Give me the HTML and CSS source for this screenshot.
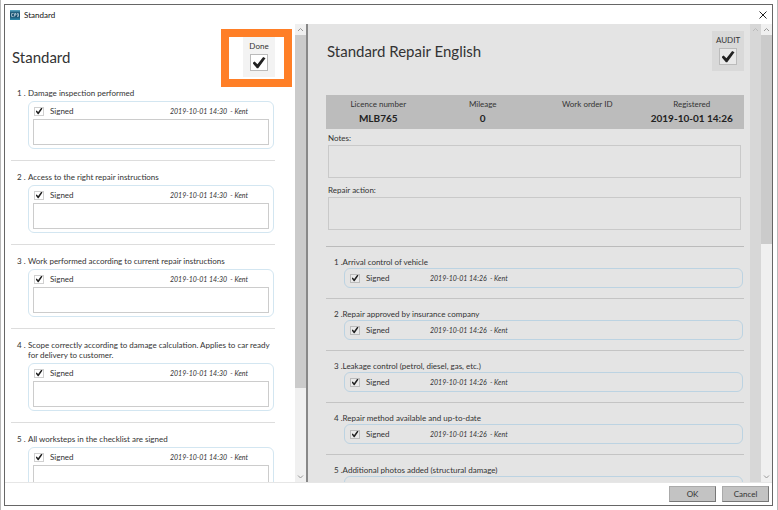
FILE: index.html
```html
<!DOCTYPE html>
<html lang="en">
<head>
    <meta charset="UTF-8">
    <meta name="viewport" content="width=device-width, initial-scale=1.0">
    <title>Standard</title>
    <link rel="stylesheet" href="styles.css">
</head>
<body>
<div class="window">
    <header class="titlebar">
        <svg class="app-icon" viewBox="0 0 10 10" aria-hidden="true">
            <defs>
                <linearGradient id="iconFill" x1="0" y1="0" x2="0" y2="1">
                    <stop offset="0" stop-color="#5fb0cc"/>
                    <stop offset="0.3" stop-color="#17506f"/>
                    <stop offset="0.65" stop-color="#17506f"/>
                    <stop offset="1" stop-color="#3390b2"/>
                </linearGradient>
            </defs>
            <rect width="10" height="10" fill="url(#iconFill)"/>
            <path d="M3.6 3.6H1.6V6.4H3.6M4.6 6.6V3.6H6V5H4.6M7 3.6H8.4V6.4H7M7 5H8.4" fill="none" stroke="#d5e8f0" stroke-width="0.7"/>
        </svg>
        <span class="window-title">Standard</span>
        <button type="button" class="close" aria-label="Close">
            <svg viewBox="0 0 8 8"><path d="M0.5 0.5L7.5 7.5M7.5 0.5L0.5 7.5" fill="none" stroke="#222" stroke-width="1"/></svg>
        </button>
    </header>
    <main class="panes">
        <section class="pane checklist">
            <div class="content">
                <div class="head">
                    <h1>Standard</h1>
                    <label class="status highlight">Done<input type="checkbox" class="check big" checked></label>
                </div>
                <ol class="steps">
                    <li>
                        <span class="num">1 .</span>
                        <h2>Damage inspection performed</h2>
                        <div class="box">
                            <label><input type="checkbox" class="check" checked>Signed</label>
                            <em>2019-10-01 14:30 &nbsp;- Kent</em>
                            <textarea aria-label="Comment 1"></textarea>
                        </div>
                    </li>
                    <li>
                        <span class="num">2 .</span>
                        <h2>Access to the right repair instructions</h2>
                        <div class="box">
                            <label><input type="checkbox" class="check" checked>Signed</label>
                            <em>2019-10-01 14:30 &nbsp;- Kent</em>
                            <textarea aria-label="Comment 2"></textarea>
                        </div>
                    </li>
                    <li>
                        <span class="num">3 .</span>
                        <h2>Work performed according to current repair instructions</h2>
                        <div class="box">
                            <label><input type="checkbox" class="check" checked>Signed</label>
                            <em>2019-10-01 14:30 &nbsp;- Kent</em>
                            <textarea aria-label="Comment 3"></textarea>
                        </div>
                    </li>
                    <li>
                        <span class="num">4 .</span>
                        <h2>Scope correctly according to damage calculation. Applies to car ready for delivery to customer.</h2>
                        <div class="box">
                            <label><input type="checkbox" class="check" checked>Signed</label>
                            <em>2019-10-01 14:30 &nbsp;- Kent</em>
                            <textarea aria-label="Comment 4"></textarea>
                        </div>
                    </li>
                    <li>
                        <span class="num">5 .</span>
                        <h2>All worksteps in the checklist are signed</h2>
                        <div class="box">
                            <label><input type="checkbox" class="check" checked>Signed</label>
                            <em>2019-10-01 14:30 &nbsp;- Kent</em>
                            <textarea aria-label="Comment 5"></textarea>
                        </div>
                    </li>
                </ol>
            </div>
            <div class="scrollbar">
                <svg class="arrow" viewBox="0 0 11 11"><path d="M3 7L5.500 4.500L8 7"/></svg>
                <div class="track"><div class="thumb"></div></div>
                <svg class="arrow" viewBox="0 0 11 11"><path d="M3 4.500L5.500 7L8 4.500"/></svg>
            </div>
        </section>
        <section class="pane repair">
            <div class="content">
                <div class="head">
                    <h1>Standard Repair English</h1>
                    <label class="status">AUDIT<input type="checkbox" class="check big" checked></label>
                </div>
                <table class="info">
                    <thead>
                        <tr><th>Licence number</th><th>Mileage</th><th>Work order ID</th><th>Registered</th></tr>
                    </thead>
                    <tbody>
                        <tr><td>MLB765</td><td>0</td><td></td><td>2019-10-01 14:26</td></tr>
                    </tbody>
                </table>
                <div class="field">
                    <label for="notes">Notes:</label>
                    <textarea id="notes"></textarea>
                </div>
                <div class="field">
                    <label for="action">Repair action:</label>
                    <textarea id="action"></textarea>
                </div>
                <ol class="steps">
                    <li>
                        <h2>1 .Arrival control of vehicle</h2>
                        <div class="box">
                            <label><input type="checkbox" class="check" checked>Signed</label>
                            <em>2019-10-01 14:26 &nbsp;- Kent</em>
                        </div>
                    </li>
                    <li>
                        <h2>2 .Repair approved by insurance company</h2>
                        <div class="box">
                            <label><input type="checkbox" class="check" checked>Signed</label>
                            <em>2019-10-01 14:26 &nbsp;- Kent</em>
                        </div>
                    </li>
                    <li>
                        <h2>3 .Leakage control (petrol, diesel, gas, etc.)</h2>
                        <div class="box">
                            <label><input type="checkbox" class="check" checked>Signed</label>
                            <em>2019-10-01 14:26 &nbsp;- Kent</em>
                        </div>
                    </li>
                    <li>
                        <h2>4 .Repair method available and up-to-date</h2>
                        <div class="box">
                            <label><input type="checkbox" class="check" checked>Signed</label>
                            <em>2019-10-01 14:26 &nbsp;- Kent</em>
                        </div>
                    </li>
                    <li>
                        <h2>5 .Additional photos added (structural damage)</h2>
                        <div class="box"></div>
                    </li>
                </ol>
            </div>
            <div class="scrollbar disabled">
                <svg class="arrow" viewBox="0 0 11 11"><path d="M3 7L5.500 4.500L8 7"/></svg>
            </div>
            <div class="scrollbar outer">
                <svg class="arrow" viewBox="0 0 11 11"><path d="M3 7L5.500 4.500L8 7"/></svg>
                <div class="track"><div class="thumb"></div></div>
                <svg class="arrow" viewBox="0 0 11 11"><path d="M3 4.500L5.500 7L8 4.500"/></svg>
            </div>
        </section>
    </main>
    <footer class="actions">
        <button type="button" class="btn">OK</button>
        <button type="button" class="btn">Cancel</button>
    </footer>
</div>
</body>
</html>
```
FILE: styles.css
```css
* {
    box-sizing: border-box;
}

body {
    height: 100vh;
    margin: 0;
    padding: 4px 4px 4px 3px;
    border: solid #b9b9b9;
    border-width: 0 1px;
    background: #fff;
    color: #333;
    font: 8px/10px Lato, "Liberation Sans", sans-serif;
    overflow: hidden;
}

h1,
h2,
ol {
    margin: 0;
    padding: 0;
    font-weight: normal;
    list-style: none;
}
h1 {
    font-size: 15px;
    line-height: 20px;
}
h2 {
    font-size: 8px;
}

button,
textarea {
    font: inherit;
    color: inherit;
}
textarea {
    display: block;
    width: 100%;
    margin: 0;
    padding: 2px;
    border: 1px solid #ccc;
    border-radius: 0;
    background: transparent;
    resize: none;
}

.window {
    display: flex;
    flex-direction: column;
    height: calc(100vh - 8px);
    border: 1px solid #666;
    background: #fff;
}

/* title bar */
.titlebar {
    display: flex;
    flex: none;
    align-items: center;
    height: 19px;
    padding: 0 5px;
}
.app-icon {
    width: 10px;
    height: 10px;
}
.window-title {
    flex: 1;
    margin-left: 4px;
    color: #111;
}
.close {
    display: flex;
    padding: 0;
    border: 0;
    background: none;
}
.close svg {
    width: 8px;
    height: 8px;
}

/* panes */
.panes {
    display: flex;
    flex: 1;
    min-height: 0;
    border-bottom: 1px solid #e6e6e6;
}
.pane {
    display: flex;
    min-width: 0;
}
.content {
    flex: 1;
    min-width: 0;
    overflow: hidden;
}
.checklist {
    flex: 0 0 303px;
    border-right: 2px solid #888;
}
.checklist .content {
    padding: 13px 20px 0 6px;
}
.repair {
    flex: 1;
    background: #e4e4e4;
}
.repair .content {
    padding: 7px 6px 0 18px;
}

.head {
    display: flex;
    justify-content: space-between;
    align-items: center;
    height: 40px;
    padding-left: 1px;
}

.status {
    position: relative;
    display: flex;
    flex-direction: column;
    align-items: center;
    gap: 3px;
    width: 32px;
    height: 40px;
    padding-top: 4px;
    background: #f3f3f3;
}
.repair .status {
    background: #d9d9d9;
}
.highlight::after {
    content: "";
    position: absolute;
    inset: -8px -17px -10px -22px;
    border: 8px solid #ff7f27;
}

/* check boxes */
.check {
    appearance: none;
    display: grid;
    place-items: center;
    flex: none;
    width: 10px;
    height: 9px;
    margin: 0;
    border: 1px solid #d0d0d0;
}
.check:checked::before {
    content: "";
    width: 7px;
    height: 7px;
    background: #222;
    clip-path: polygon(0 55%, 16% 42%, 38% 64%, 82% 4%, 100% 14%, 44% 98%, 34% 98%);
}
.check.big {
    width: 18px;
    height: 17px;
    border-color: #bbb;
    background: #fff;
}
.check.big:checked::before {
    width: 13px;
    height: 12px;
}
.repair .check {
    border-color: #bbb;
    background: #e9e9e9;
}

/* steps */
.steps li {
    border-bottom: 1px solid #ddd;
}
.box {
    border: 1px solid #d3e6f1;
    border-radius: 6px;
}
.box label {
    display: flex;
    align-items: center;
    gap: 6px;
}
.box em {
    font-size: 7px;
}

.checklist li {
    display: grid;
    grid-template-columns: 11px 1fr;
    row-gap: 3px;
    padding: 11px 1px 11px 6px;
}
.checklist .box {
    display: grid;
    grid-template-columns: 137px 1fr;
    align-content: start;
    grid-column: 2;
    height: 48px;
    padding: 4px;
}
.checklist .box textarea {
    grid-column: 1 / 3;
    height: 26px;
    margin-top: 3px;
}
.checklist .box label {
    padding-left: 1px;
}

.repair .steps {
    margin-top: 16px;
    border-top: 1px solid #bbb;
}
.repair li {
    padding: 10px 1px 10px 8px;
    border-color: #c4c4c4;
}
.repair .box {
    display: grid;
    grid-template-columns: 80px 1fr;
    align-items: center;
    height: 20px;
    margin: 1px 0 0 10px;
    padding: 0 5px;
    border-color: #bcd3e2;
}

/* order info */
.info {
    width: 100%;
    height: 34px;
    margin: 24px 0 4px;
    border-collapse: collapse;
    table-layout: fixed;
    background: #bcbcbc;
    text-align: center;
}
.info th {
    padding: 4px 0 0;
    font-weight: normal;
}
.info td {
    padding: 0 0 3px;
    font-size: 10px;
    font-weight: bold;
    line-height: 14px;
    color: #222;
}

.field {
    padding: 0 3px 0 2px;
    margin-bottom: 7px;
}
.field textarea {
    height: 33px;
    margin-top: 2px;
    border-color: #c9c9c9;
}

/* scroll bars */
.scrollbar {
    display: flex;
    flex: none;
    flex-direction: column;
    width: 11px;
    background: #f0f0f0;
}
.scrollbar.disabled {
    background: #d7d7d7;
}
.arrow {
    width: 11px;
    height: 11px;
    fill: none;
    stroke: #999;
}
.disabled .arrow {
    stroke: #bbb;
}
.track {
    flex: 1;
}
.thumb {
    height: 81%;
    background: #cbcbcb;
}
.outer .thumb {
    height: 48%;
}

/* footer */
.actions {
    display: flex;
    flex: none;
    justify-content: flex-end;
    gap: 6px;
    height: 22px;
    padding: 3px;
}
.btn {
    width: 47px;
    height: 16px;
    padding: 0;
    border: 1px solid #aaa;
    border-color: #aaa #777 #777 #aaa;
    background: #c3c3c3;
}
```
